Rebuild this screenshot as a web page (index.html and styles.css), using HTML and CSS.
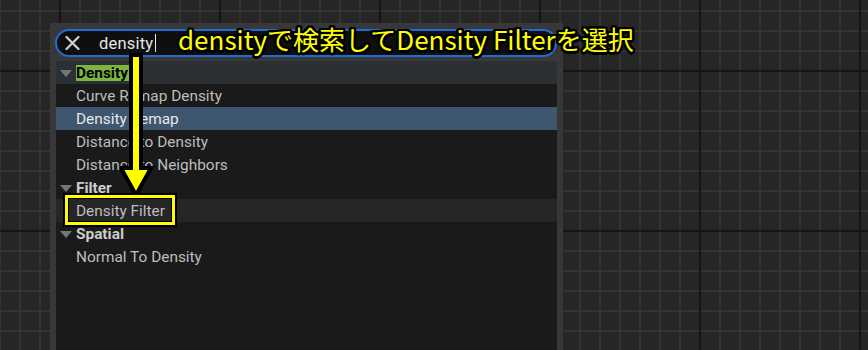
FILE: index.html
```html
<!DOCTYPE html>
<html lang="ja">
<head>
<meta charset="utf-8">
<title>Search</title>
<link rel="stylesheet" href="styles.css">
</head>
<body>
<div class="canvas">
  <div class="menu">
    <div class="search">
      <svg class="clear" width="15" height="14" viewBox="0 0 15 14"><path d="M1.5 1 L13.5 13 M13.5 1 L1.5 13" stroke="#d0d0d0" stroke-width="2.2" stroke-linecap="round"/></svg>
      <span class="query">density</span><span class="caret"></span>
    </div>
    <div class="list">
      <div class="row head active"><span class="tri"></span><span class="match">Density</span></div>
      <div class="row item">Curve Remap Density</div>
      <div class="row item selected">Density Remap</div>
      <div class="row item">Distance to Density</div>
      <div class="row item">Distance to Neighbors</div>
      <div class="row head"><span class="tri"></span><span>Filter</span></div>
      <div class="row item hover">Density Filter</div>
      <div class="row head"><span class="tri"></span><span>Spatial</span></div>
      <div class="row item">Normal To Density</div>
    </div>
  </div>
  <div class="note">densityで検索してDensity Filterを選択</div>
  <svg class="arrow" width="40" height="150" viewBox="0 0 40 150">
    <path d="M11 2 H21 V115 H31 L16 142 L1 115 H11 Z" fill="#ffff00" stroke="#000" stroke-width="4" stroke-linejoin="miter"/>
  </svg>
  <div class="box"></div>
</div>
</body>
</html>
```
FILE: styles.css
```css
html, body {
  margin: 0;
  padding: 0;
  background: #262626;
}
.canvas {
  position: relative;
  width: 868px;
  height: 350px;
  overflow: hidden;
  background-color: #262626;
  background-image:
    linear-gradient(to right, #151515 2px, transparent 2px),
    linear-gradient(to bottom, #151515 2px, transparent 2px),
    linear-gradient(to right, #333333 2px, transparent 2px),
    linear-gradient(to bottom, #333333 2px, transparent 2px);
  background-size: 160px 160px, 160px 160px, 20px 20px, 20px 20px;
  background-position: 59px 0, 0 70px, 19px 0, 0 10px;
  font-family: Roboto, "Noto Sans", sans-serif;
}
.menu {
  position: absolute;
  left: 50px;
  top: 23px;
  width: 501px;
  height: 340px;
  padding: 6px 6px 0 6px;
  background: #383838;
  display: flex;
  flex-direction: column;
  gap: 4px;
}
.search {
  height: 24px;
  margin-left: -1px;
  border: 2px solid #1e6dd3;
  border-radius: 14px;
  background: #0f0f0f;
  display: flex;
  align-items: center;
  padding-left: 8px;
}
.clear {
  flex: none;
}
.query {
  margin-left: 19px;
  color: #e6e6e6;
  font-size: 16.5px;
  letter-spacing: 0.2px;
}
.caret {
  width: 1px;
  height: 18px;
  margin-left: 2px;
  background: #e6e6e6;
}
.list {
  flex: 1;
  background: #1a1a1a;
  display: flex;
  flex-direction: column;
}
.row {
  height: 23px;
  display: flex;
  align-items: center;
  font-size: 15.4px;
  color: #bdbdbd;
  flex: none;
}
.item {
  padding-left: 20px;
}
.head {
  padding-left: 4px;
  font-weight: bold;
  color: #cccccc;
}
.head.active {
  background: #2b3035;
}
.tri {
  width: 0;
  height: 0;
  border-left: 6px solid transparent;
  border-right: 6px solid transparent;
  border-top: 7px solid #767676;
  margin-right: 4px;
  margin-top: 1px;
}
.match {
  background: #7cb53c;
  color: #000;
  padding: 0 1px 0 0;
  line-height: 16px;
}
.selected {
  background: #3e566f;
  color: #e8e8e8;
}
.hover {
  background: #262626;
}
.note {
  position: absolute;
  left: 178px;
  top: 22px;
  font-family: "Noto Sans CJK JP", sans-serif;
  font-size: 26px;
  line-height: 34px;
  color: #ffff00;
  white-space: nowrap;
  text-shadow:
    2.5px 0 0 #000, -2.5px 0 0 #000, 0 2.5px 0 #000, 0 -2.5px 0 #000,
    1.8px 1.8px 0 #000, -1.8px 1.8px 0 #000, 1.8px -1.8px 0 #000, -1.8px -1.8px 0 #000,
    1px 2.3px 0 #000, -1px 2.3px 0 #000, 1px -2.3px 0 #000, -1px -2.3px 0 #000,
    2.3px 1px 0 #000, -2.3px 1px 0 #000, 2.3px -1px 0 #000, -2.3px -1px 0 #000;
}
.arrow {
  position: absolute;
  left: 120px;
  top: 53px;
}
.box {
  position: absolute;
  left: 65px;
  top: 195px;
  width: 104px;
  height: 24px;
  border: 3px solid #ffff00;
  box-shadow: 0 0 0 2px #000, inset 0 0 0 1px #000;
}
```
